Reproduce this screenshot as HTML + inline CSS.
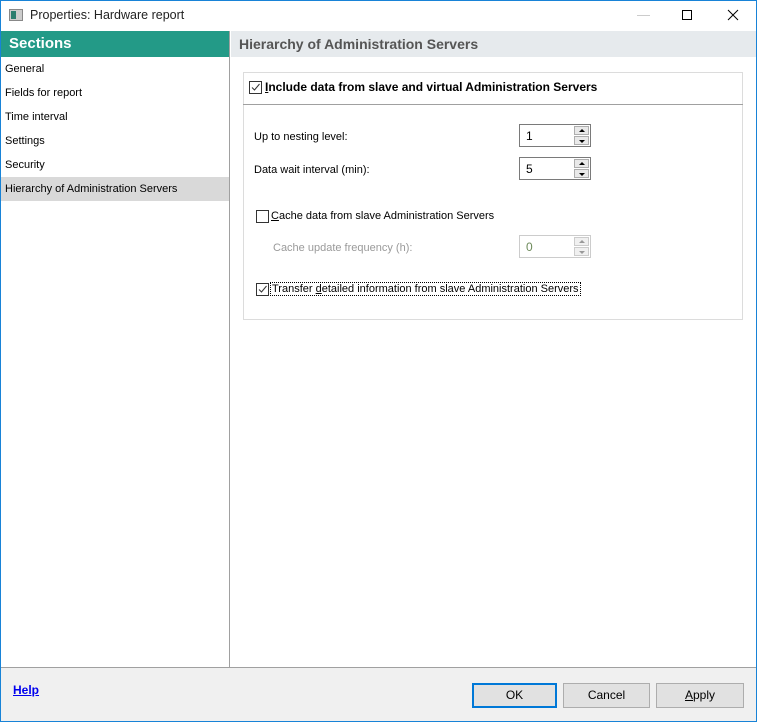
<!DOCTYPE html>
<html><head><style>
*{margin:0;padding:0;box-sizing:border-box}
body{width:763px;height:723px;background:#fff;font-family:"Liberation Sans",sans-serif;font-size:11px;color:#000;position:relative;overflow:hidden}
.a{position:absolute}
.win{left:0;top:0;width:757px;height:722px;border:1px solid #1883d7;background:#fff}
.cb{position:absolute;width:13px;height:13px;border:1px solid #333;background:#fff}
.cb svg{position:absolute;left:0;top:0}
.spin{position:absolute;width:72px;height:23px;border:1px solid #7a7a7a;background:#fff}
.spin .v{position:absolute;left:6px;top:4px;font-size:12px}
.spin .b{position:absolute;left:54px;width:15px;height:9px;border:1px solid #adadad;background:#e9e9e9}
.spin .b i{position:absolute;left:4px;width:0;height:0;border-left:3px solid transparent;border-right:3px solid transparent}
.btn{position:absolute;top:683px;height:25px;border:1px solid #adadad;background:#e1e1e1;text-align:center;line-height:23px;font-size:12px}
</style></head><body>
<div class="a win"></div>
<div class="a" style="left:9px;top:9px;width:14px;height:12px;border:1px solid #888;background:#ccc"><div style="position:absolute;left:1px;top:1px;width:5px;height:8px;background:#2a7d6e"></div></div>
<div class="a" style="left:30px;top:8px;font-size:12.5px;color:#222">Properties: Hardware report</div>
<div class="a" style="left:637px;top:15px;width:13px;height:1px;background:#ccc"></div>
<div class="a" style="left:682px;top:10px;width:10px;height:10px;border:1px solid #000"></div>
<svg class="a" style="left:727px;top:9px" width="12" height="12"><path d="M1 1L11 11M11 1L1 11" stroke="#000" stroke-width="1"/></svg>
<div class="a" style="left:1px;top:31px;width:228px;height:26px;background:#239a87;color:#fff;font-weight:bold;font-size:15px;padding:4px 0 0 8px">Sections</div>
<div class="a" style="left:229px;top:31px;width:1px;height:636px;background:#a0a0a0"></div>
<div class="a" style="left:5px;top:63px">General</div>
<div class="a" style="left:5px;top:87px">Fields for report</div>
<div class="a" style="left:5px;top:111px">Time interval</div>
<div class="a" style="left:5px;top:135px">Settings</div>
<div class="a" style="left:5px;top:159px">Security</div>
<div class="a" style="left:1px;top:177px;width:228px;height:24px;background:#d9d9d9"></div>
<div class="a" style="left:5px;top:183px">Hierarchy of Administration Servers</div>
<div class="a" style="left:231px;top:31px;width:525px;height:26px;background:#e6eaed;color:#555;font-weight:bold;font-size:14px;padding:5px 0 0 8px">Hierarchy of Administration Servers</div>
<div class="a" style="left:243px;top:72px;width:500px;height:248px;border:1px solid #dcdcdc"></div>
<div class="a" style="left:243px;top:104px;width:500px;height:1px;background:#a0a0a0"></div>
<div class="cb" style="left:249px;top:81px"><svg width="11" height="11"><path d="M2 5.5L4.5 8L9.5 2" stroke="#333" fill="none"/></svg></div>
<div class="a" style="left:265px;top:80px;font-weight:bold;font-size:12px"><u>I</u>nclude data from slave and virtual Administration Servers</div>
<div class="a" style="left:254px;top:131px">Up to nesting level:</div>
<div class="spin" style="left:519px;top:124px"><span class="v">1</span><div class="b" style="top:1px"><i style="top:2px;border-bottom:3px solid #000"></i></div><div class="b" style="top:11px"><i style="top:3px;border-top:3px solid #000"></i></div></div>
<div class="a" style="left:254px;top:164px">Data wait interval (min):</div>
<div class="spin" style="left:519px;top:157px"><span class="v">5</span><div class="b" style="top:1px"><i style="top:2px;border-bottom:3px solid #000"></i></div><div class="b" style="top:11px"><i style="top:3px;border-top:3px solid #000"></i></div></div>
<div class="cb" style="left:256px;top:210px"></div>
<div class="a" style="left:271px;top:210px"><u>C</u>ache data from slave Administration Servers</div>
<div class="a" style="left:273px;top:242px;color:#9a9a9a">Cache update frequency (h):</div>
<div class="spin" style="left:519px;top:235px;border-color:#ccc"><span class="v" style="color:#6d8a5a">0</span><div class="b" style="top:1px;border-color:#ccc;background:#f0f0f0"><i style="top:2px;border-bottom:3px solid #999"></i></div><div class="b" style="top:11px;border-color:#ccc;background:#f0f0f0"><i style="top:3px;border-top:3px solid #999"></i></div></div>
<div class="cb" style="left:256px;top:283px"><svg width="11" height="11"><path d="M2 5.5L4.5 8L9.5 2" stroke="#333" fill="none"/></svg></div>
<div class="a" style="left:270px;top:282px;border:1px dotted #000;padding:0 1px">Transfer <u>d</u>etailed information from slave Administration Servers</div>
<div class="a" style="left:1px;top:667px;width:755px;height:1px;background:#a0a0a0"></div>
<div class="a" style="left:1px;top:668px;width:755px;height:53px;background:#f0f0f0"></div>
<div class="a" style="left:13px;top:683px;color:#0000ee;font-weight:bold;text-decoration:underline;font-size:12px">Help</div>
<div class="btn" style="left:472px;width:85px;border:2px solid #0078d7;line-height:21px">OK</div>
<div class="btn" style="left:563px;width:87px">Cancel</div>
<div class="btn" style="left:656px;width:88px"><u>A</u>pply</div>
</body></html>
